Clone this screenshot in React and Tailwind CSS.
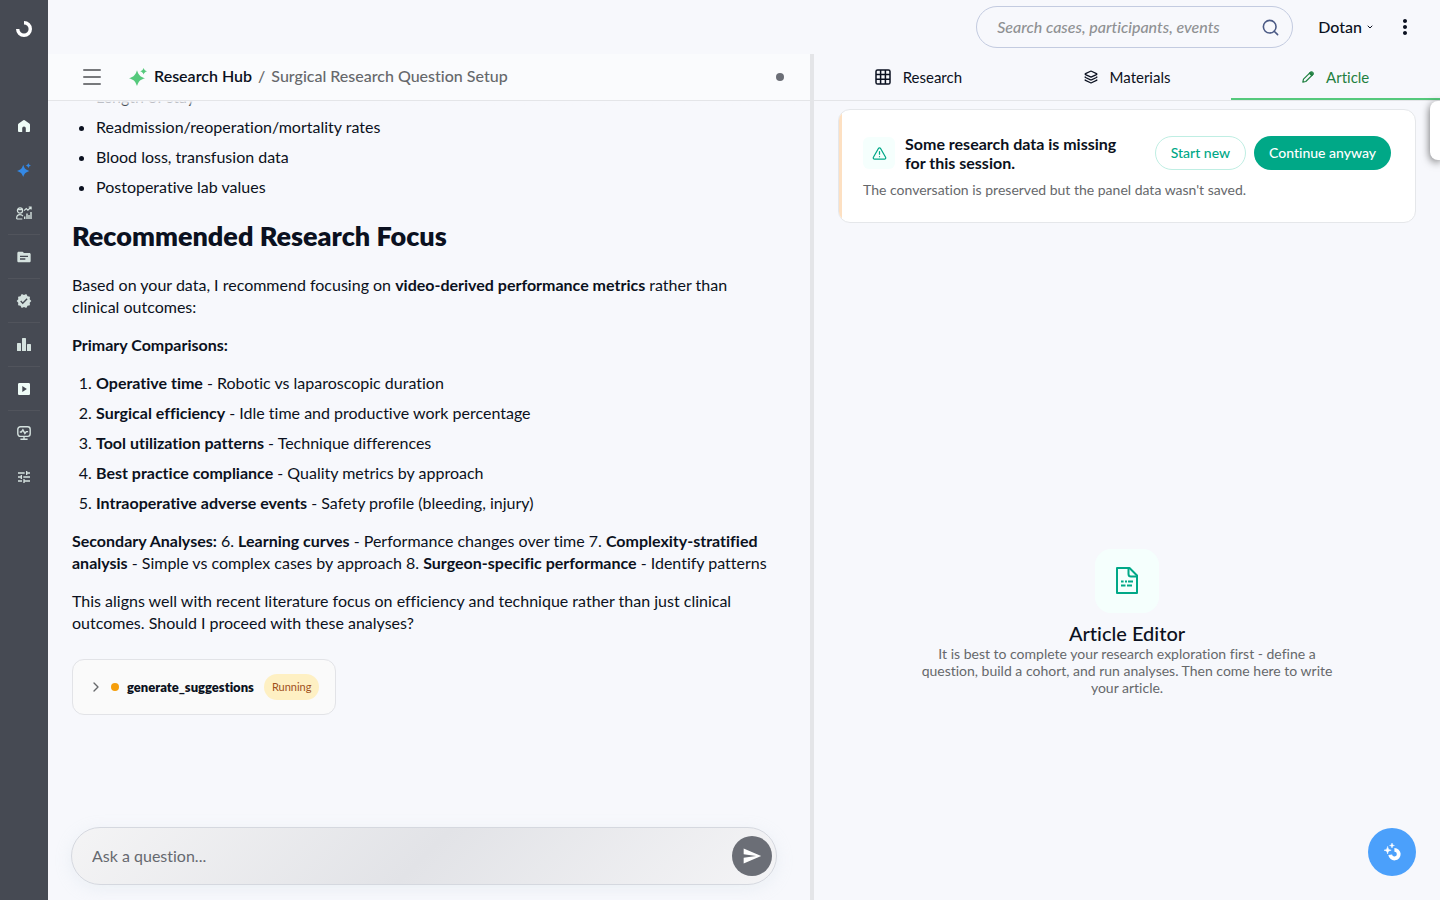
import React from 'react';
import { ChevronDown, ChevronRight, Layers, Search, TriangleAlert } from 'lucide-react';
import { MdMoreVert, MdSend, MdTopic, MdTune, MdVerified } from 'react-icons/md';

const Sparkles = ({ className }) => (
    <svg viewBox="0 0 18 18" fill="currentColor" className={className} aria-hidden="true">
        <path d="M8 2.2C9.6 7.2 11.3 8.8 16 10.2 11.3 11.6 9.6 13.2 8 18 6.4 13.2 4.7 11.6 0 10.2 4.7 8.8 6.4 7.2 8 2.2Z" />
        <path d="M14.6 0C15.3 2 16.1 2.7 18 3.3 16.1 3.9 15.3 4.6 14.6 6.6 13.9 4.6 13.1 3.9 11.2 3.3 13.1 2.7 13.9 2 14.6 0Z" />
    </svg>
);

const Logo = () => (
    <svg viewBox="0 0 16 16" className="size-4" fill="none" stroke="#fff" strokeWidth="3.4" aria-hidden="true">
        <path d="M8 1.7A6.3 6.3 0 1 1 1.7 8" />
    </svg>
);

const HomeIcon = () => (
    <svg viewBox="0 0 12 12" className="size-3" fill="currentColor" aria-hidden="true">
        <path d="M5.3.3a1.2 1.2 0 0 1 1.4 0l4.6 3.2c.4.3.7.7.7 1.2V11a1 1 0 0 1-1 1H7.8V8.3a1.8 1.8 0 0 0-3.6 0V12H1a1 1 0 0 1-1-1V4.7c0-.5.3-.9.7-1.2Z" />
    </svg>
);

const PerformanceIcon = () => (
    <svg viewBox="0 0 16 14" className="h-3.5 w-4" fill="none" stroke="currentColor" strokeWidth="1.2" aria-hidden="true">
        <circle cx="4" cy="4.5" r="2.6" />
        <path d="M1.7 3.7h4.5M.7 13v-1c0-2 1.4-3.3 3.3-3.3 1.3 0 2.3.5 2.9 1.4M.7 13h5.6" />
        <path d="M8 4.6l2.3-2 1.6 1.5 3-2.9M12.7 1h2.4v2.4" />
        <path d="M8.7 13v-2.5M11 13V7.5M13 13V9M15 13V6" strokeWidth="1.4" />
    </svg>
);

const BarsIcon = () => (
    <svg viewBox="0 0 14 13" className="h-[13px] w-3.5" fill="currentColor" aria-hidden="true">
        <rect x="0" y="5" width="4" height="8" rx=".6" />
        <rect x="5" y="0" width="4" height="13" rx=".6" />
        <rect x="10" y="6" width="4" height="7" rx=".6" />
    </svg>
);

const PlayIcon = () => (
    <svg viewBox="0 0 12 12" className="size-3" fill="currentColor" aria-hidden="true">
        <path fillRule="evenodd" d="M1.3 0h9.4C11.4 0 12 .6 12 1.3v9.4c0 .7-.6 1.3-1.3 1.3H1.3C.6 12 0 11.4 0 10.7V1.3C0 .6.6 0 1.3 0ZM4.3 3v6l4.6-3Z" />
    </svg>
);

const MonitorIcon = () => (
    <svg viewBox="0 0 14 14" className="size-3.5" fill="none" stroke="currentColor" strokeWidth="1.4" aria-hidden="true">
        <rect x=".8" y=".8" width="12.4" height="9.6" rx="2.6" />
        <path d="M2.8 6h1.6l1.5-2.2 2 3.6L9.3 5.6h1.8M7 10.5V13M3.4 13.2h7.2" />
    </svg>
);

const TableIcon = () => (
    <svg viewBox="0 0 16 16" className="size-4" fill="none" stroke="currentColor" strokeWidth="1.5" aria-hidden="true">
        <rect x="1" y="1" width="14" height="14" rx="1.6" />
        <path d="M1 5.6h14M1 10.3h14M5.6 1v14M10.4 1v14" />
    </svg>
);

const PencilIcon = () => (
    <svg viewBox="0 0 12 12" className="size-3" fill="none" stroke="currentColor" strokeWidth="1.2" strokeLinejoin="round" aria-hidden="true">
        <path d="M.8 11.2l.7-3 6.9-6.9a1.5 1.5 0 0 1 2.3 2.3l-6.9 6.9Z" />
        <path d="M7.4 2.3l2.3 2.3 1.2-1.3-2-2Z" fill="currentColor" />
    </svg>
);

const DocumentIcon = () => (
    <svg viewBox="0 0 22 27" className="h-[27px] w-[22px]" fill="none" stroke="#00a887" strokeWidth="2" strokeLinejoin="round" aria-hidden="true">
        <path d="M1 1h12.5L21 8.5V26H1Z" />
        <path d="M12.5 1.5V7c0 1.4.9 2.5 2.5 2.5h5.5" />
        <path d="M5 14.5h2.6M9 14.5h2M12 14.5h5M5 18.5h4.5M11 18.5h5" strokeWidth="1.8" />
    </svg>
);

const AssistantIcon = () => (
    <svg viewBox="0 0 17 18" className="h-[18px] w-[17px]" aria-hidden="true">
        <path d="M10.4 6.9A4.3 4.3 0 1 1 6.2 11.8" fill="none" stroke="#fff" strokeWidth="3.8" />
        <path d="M3.6 3.4C4 6 4.7 6.7 7.2 7.2 4.7 7.7 4 8.4 3.6 11 3.2 8.4 2.5 7.7 0 7.2 2.5 6.7 3.2 6 3.6 3.4ZM8 0c.3 1.7.8 2.2 2.4 2.5C8.8 2.8 8.3 3.3 8 5 7.7 3.3 7.2 2.8 5.6 2.5 7.2 2.2 7.7 1.7 8 0Z" fill="#fff" stroke="#fff" strokeWidth=".5" />
    </svg>
);

const navItems = [
    { label: 'Home', icon: <HomeIcon />, style: 'h-11 text-[#effcf7]' },
    { label: 'Research Hub', icon: <Sparkles className="size-3.5" />, style: 'h-[43px] text-[#3489e6]' },
    { label: 'Performance', icon: <PerformanceIcon />, style: 'h-11 border-b border-[#51545c]' },
    { label: 'Cases', icon: <MdTopic size={16} />, style: 'h-11 border-b border-[#51545c]' },
    { label: 'Quality', icon: <MdVerified size={16} />, style: 'h-11 border-b border-[#51545c]' },
    { label: 'Statistics', icon: <BarsIcon />, style: 'h-11 border-b border-[#51545c]' },
    { label: 'Videos', icon: <PlayIcon />, style: 'h-11 border-b border-[#51545c] text-[#effcf7]' },
    { label: 'Monitoring', icon: <MonitorIcon />, style: 'h-11' },
    { label: 'Settings', icon: <MdTune size={16} />, style: 'h-[43px]' },
];

const comparisons = [
    ['Operative time', 'Robotic vs laparoscopic duration'],
    ['Surgical efficiency', 'Idle time and productive work percentage'],
    ['Tool utilization patterns', 'Technique differences'],
    ['Best practice compliance', 'Quality metrics by approach'],
    ['Intraoperative adverse events', 'Safety profile (bleeding, injury)'],
];

const tabs = [
    { label: 'Research', icon: <TableIcon /> },
    { label: 'Materials', icon: <Layers size={14} strokeWidth={2.2} /> },
    { label: 'Article', icon: <PencilIcon />, active: true },
];

const Sidebar = () => (
    <nav className="flex w-12 shrink-0 flex-col items-center bg-[#464a53] text-[#d5e2df]">
        <a href="#top" aria-label="Dashboard" className="flex h-[104px] items-start pt-[21px]">
            <Logo />
        </a>
        {navItems.map((item) => (
            <a
                key={item.label}
                href={`#${item.label}`}
                aria-label={item.label}
                className={`flex w-8 shrink-0 items-center justify-center ${item.style}`}
            >
                {item.icon}
            </a>
        ))}
    </nav>
);

const TopBar = () => (
    <header className="flex h-[54px] shrink-0 items-center justify-end pr-[23px]">
        <label className="flex h-[42px] w-[317px] items-center rounded-full border border-[#c3cbe0] pr-3 pl-5">
            <input
                type="search"
                aria-label="Search"
                placeholder="Search cases, participants, events"
                className="min-w-0 flex-1 bg-transparent text-base font-medium italic outline-none placeholder:text-[#8f9193]"
            />
            <Search size={19} strokeWidth={2} className="text-[#4b5a85]" />
        </label>
        <button className="ml-[25px] flex items-center gap-1 text-base font-medium">
            Dotan
            <ChevronDown size={8} strokeWidth={3} />
        </button>
        <button aria-label="More" className="ml-[19px]">
            <MdMoreVert size={24} />
        </button>
    </header>
);

const Chat = () => (
    <section className="flex min-w-0 flex-28 flex-col">
        <div className="flex h-[47px] shrink-0 items-center border-b border-[#e4e5e8] bg-[#fafbfd] pr-[26px] pl-[35px]">
            <button aria-label="Menu" className="flex w-[18px] flex-col gap-[5px]">
                <span className="h-0.5 rounded bg-[#77797c]"></span>
                <span className="h-0.5 rounded bg-[#77797c]"></span>
                <span className="h-0.5 rounded bg-[#77797c]"></span>
            </button>
            <Sparkles className="ml-7 size-[18px] text-[#55c97c]" />
            <div className="ml-[7px] flex gap-1.5 pb-0.5 font-medium text-[#66686b]">
                <span className="font-semibold text-[#0b1120]">Research Hub</span>
                <span>/</span>
                <span>Surgical Research Question Setup</span>
            </div>
            <span className="ml-auto size-2 rounded-full bg-[#6b6e76]"></span>
        </div>

        <div className="relative min-h-0 flex-1 overflow-hidden pr-9 pl-6 text-base leading-[22px]">
            <div className="absolute inset-x-0 top-0 h-1.5 bg-linear-to-b from-[#f7f8fc] to-transparent"></div>
            <ul className="-mt-[15px] list-disc space-y-2 pl-6">
                <li>Length of stay</li>
                <li>Readmission/reoperation/mortality rates</li>
                <li>Blood loss, transfusion data</li>
                <li>Postoperative lab values</li>
            </ul>
            <h2 className="my-[22px] text-[27px] leading-8 font-extrabold">Recommended Research Focus</h2>
            <p className="mb-4">
                Based on your data, I recommend focusing on <strong>video-derived performance metrics</strong> rather than clinical outcomes:
            </p>
            <p className="mb-4"><strong>Primary Comparisons:</strong></p>
            <ol className="mb-4 list-decimal space-y-2 pl-6">
                {comparisons.map(([name, detail]) => (
                    <li key={name}><strong>{name}</strong> - {detail}</li>
                ))}
            </ol>
            <p className="mb-4">
                <strong>Secondary Analyses:</strong> 6. <strong>Learning curves</strong> - Performance changes over time 7. <strong>Complexity-stratified analysis</strong> - Simple vs complex cases by approach 8. <strong>Surgeon-specific performance</strong> - Identify patterns
            </p>
            <p className="mb-[25px]">
                This aligns well with recent literature focus on efficiency and technique rather than just clinical outcomes. Should I proceed with these analyses?
            </p>
            <button className="flex h-14 items-center rounded-xl border border-[#e2e3e7] bg-[#fafafa] px-4">
                <ChevronRight size={16} strokeWidth={2} className="-ml-px text-[#66686b]" />
                <span className="ml-[7px] size-2 rounded-full bg-[#f59e0b]"></span>
                <span className="ml-2 text-[13px] font-extrabold">generate_suggestions</span>
                <span className="ml-2.5 flex h-[26px] items-center rounded-full bg-[#fef0c3] px-2 text-[11px] text-[#a0501c]">Running</span>
            </button>
        </div>

        <form className="mr-[33px] mb-[15px] ml-[23px] flex h-[58px] shrink-0 items-center rounded-full border border-[#d5d8df] bg-linear-[135deg,#f4f4f5,#e2e3e7_50%,#f4f4f6] pr-1 pl-5 shadow-[0_4px_16px_rgba(200,215,225,0.25)]">
            <input
                type="text"
                aria-label="Ask a question"
                placeholder="Ask a question..."
                className="min-w-0 flex-1 bg-transparent text-base outline-none placeholder:text-[#66696f]"
            />
            <button type="button" aria-label="Send" className="flex size-10 items-center justify-center rounded-full bg-[#6b6e76] text-white">
                <MdSend size={20} />
            </button>
        </form>
    </section>
);

const SessionNotice = () => (
    <div className="relative mx-6 mt-2 overflow-hidden rounded-xl border border-[#e5e7ea] bg-white p-6">
        <div className="absolute inset-y-0 left-0 w-[3px] bg-[#fde0c2]"></div>
        <div className="flex items-center">
            <div className="flex size-8 shrink-0 items-center justify-center rounded-md bg-[#f5fffd] text-[#00a887]">
                <TriangleAlert size={15} strokeWidth={2} />
            </div>
            <h3 className="mr-auto ml-2.5 max-w-[230px] text-base leading-[19px] font-bold">
                Some research data is missing for this session.
            </h3>
            <button className="h-[34px] shrink-0 rounded-full border border-[#bfeee3] px-[15px] text-sm font-medium text-[#00a887]">Start new</button>
            <button className="ml-2 h-[34px] shrink-0 rounded-full bg-[#00a887] px-[15px] text-sm font-medium text-white">Continue anyway</button>
        </div>
        <p className="mt-[9px] text-sm leading-[17px] text-[#66686b]">The conversation is preserved but the panel data wasn't saved.</p>
    </div>
);

const ArticlePanel = () => (
    <section className="flex min-w-0 flex-23 flex-col">
        <div role="tablist" className="flex h-[47px] shrink-0 border-b border-[#e4e5e8]">
            {tabs.map((tab) => (
                <button
                    key={tab.label}
                    role="tab"
                    aria-selected={!!tab.active}
                    className={`flex flex-1 items-center justify-center gap-3 border-b-2 pt-0.5 text-[15px] ${tab.active ? 'border-[#55c97c] text-[#1f8040]' : 'border-transparent'}`}
                >
                    {tab.icon}
                    {tab.label}
                </button>
            ))}
        </div>
        <SessionNotice />
        <div className="flex flex-1 flex-col items-center justify-center px-6 pt-[122px] text-center">
            <div className="flex size-16 items-center justify-center rounded-2xl bg-[#f5fffd]">
                <DocumentIcon />
            </div>
            <h3 className="mt-2 text-xl leading-6 font-medium">Article Editor</h3>
            <p className="max-w-[420px] pb-px text-sm leading-[17px] text-[#66686b]">
                It is best to complete your research exploration first - define a question, build a cohort, and run analyses. Then come here to write your article.
            </p>
        </div>
    </section>
);

const App = () => (
    <div id="top" className="relative flex h-screen overflow-hidden bg-[#f7f8fc] font-['Lato',sans-serif] text-[#0b1120] [font-variant-ligatures:none]">
        <Sidebar />
        <div className="flex min-w-0 flex-1 flex-col">
            <TopBar />
            <main className="flex min-h-0 flex-1">
                <Chat />
                <div className="w-1 shrink-0 bg-[#e4e5e8]"></div>
                <ArticlePanel />
            </main>
        </div>
        {/* Collapsed drawer handle */}
        <div className="absolute top-[101px] right-0 h-[59px] w-2.5 rounded-l-lg bg-white shadow-[0_2px_8px_rgba(0,0,0,0.6)]"></div>
        <button aria-label="Assistant" className="absolute right-6 bottom-6 flex size-12 items-center justify-center rounded-full bg-[#4ba0fb]">
            <AssistantIcon />
        </button>
    </div>
);

export default App;
